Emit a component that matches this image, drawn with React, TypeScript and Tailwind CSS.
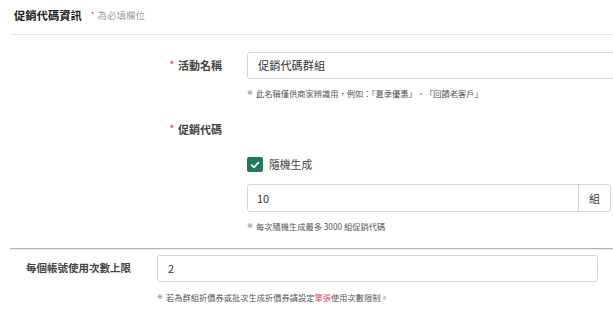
import React from "react";

const F = { fontFamily: '"Noto Sans CJK TC", "Noto Sans", "Liberation Sans", sans-serif' };

function Req() {
  return <span className="text-[#e8485e] text-[9px] leading-none mr-[4px] relative top-[-1px]">*</span>;
}

function Mark() {
  return <span style={{ fontFamily: '"DejaVu Sans", sans-serif' }} className="text-[#777] text-[7px] leading-none mr-[3px]">※</span>;
}

function Hint({ children, className }: { children: React.ReactNode; className: string }) {
  return (
    <div className={"h-[12px] flex items-center whitespace-nowrap text-[8.25px] leading-none text-[#555] " + className}>
      {children}
    </div>
  );
}

export default function App() {
  return (
    <div style={F} className="w-[613px] h-[315px] bg-white overflow-hidden text-[#333]">
      <div className="flex items-center h-[28px] pl-[14px] pt-[1px]">
        <span className="text-[11.3px] font-bold text-[#222] leading-[14px]">促銷代碼資訊</span>
        <span className="ml-[9px] text-[#e8485e] text-[8px] leading-[14px]">*</span>
        <span className="ml-[3px] text-[9.5px] text-[#a0a0a0] leading-[14px]">為必填欄位</span>
      </div>
      <div className="ml-[10px] mt-[6px] h-px bg-[#e6e6e6]" />

      <div className="mt-[17px] flex items-start h-[27px]">
        <div className="w-[222px] shrink-0 h-[27px] flex items-center justify-end text-[11px] leading-none font-semibold text-[#444]">
          <Req />活動名稱
        </div>
        <div className="ml-[25px] w-[400px] shrink-0 h-[27px] border border-[#d6d6d6] rounded-[3px] flex items-center pl-[10px] text-[11.2px] leading-none text-[#333]">
          促銷代碼群組
        </div>
      </div>
      <Hint className="ml-[247px] mt-[8px]"><Mark />此名稱僅供商家辨識用，例如：「夏季優惠」、「回饋老客戶」</Hint>

      <div className="mt-[23px] w-[222px] h-[14px] flex items-center justify-end text-[11px] leading-none font-semibold text-[#444]">
        <Req />促銷代碼
      </div>

      <div className="ml-[247px] mt-[21px] flex items-center h-[15px]">
        <div className="w-[16px] h-[15px] bg-[#1d7a61] rounded-[2px] flex items-center justify-center">
          <svg width="10" height="10" viewBox="0 0 10 10">
            <path d="M1.8 5.2 L4 7.3 L8.3 2.8" stroke="white" strokeWidth="1.7" fill="none" strokeLinecap="square" />
          </svg>
        </div>
        <span className="ml-[6px] text-[10.8px] leading-none text-[#444]">隨機生成</span>
      </div>

      <div className="ml-[247px] mt-[12px] w-[364px] h-[28px] border border-[#d6d6d6] rounded-[3px] flex">
        <div className="flex-1 flex items-center pl-[9px] text-[11px] leading-none text-[#333]">10</div>
        <div className="w-[32px] border-l border-[#d6d6d6] flex items-center justify-center text-[11px] leading-none text-[#444]">組</div>
      </div>
      <Hint className="ml-[247px] mt-[8px]"><Mark />每次隨機生成最多 3000 組促銷代碼</Hint>

      <div className="ml-[10px] mt-[16px] h-px bg-[#b3b3b3]" />
      <div className="ml-[10px] h-px bg-[#ececec]" />

      <div className="mt-[5px] flex items-center h-[27px]">
        <div className="pl-[26px] w-[157px] shrink-0 text-[10.5px] leading-none font-semibold text-[#444]">每個帳號使用次數上限</div>
        <div className="w-[441px] shrink-0 h-[27px] border border-[#d6d6d6] rounded-[3px] flex items-center pl-[10px] text-[11px] leading-none text-[#333]">2</div>
      </div>
      <Hint className="ml-[157px] mt-[9px]">
        <Mark />若為群組折價券或批次生成折價券請設定<span className="text-[#e8485e]">單張</span>使用次數限制。
      </Hint>
    </div>
  );
}
